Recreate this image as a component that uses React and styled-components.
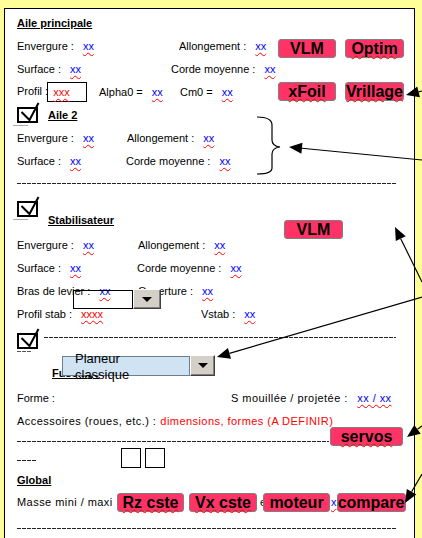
import React from "react"
import styled, { createGlobalStyle, css } from "styled-components"

const GlobalStyle = createGlobalStyle`
  html, body {
    margin: 0;
    padding: 0;
    overflow: hidden;
    background: #ffff99;
  }
  body {
    font-family: "Liberation Sans", Arial, sans-serif;
    font-size: 11px;
    color: #000;
  }
`

const Canvas = styled.div`
  position: relative;
  box-sizing: border-box;
  width: 422px;
  height: 538px;
  padding: 8px 0 0 4px;
  overflow: hidden;
`

const Page = styled.div`
  position: relative;
  box-sizing: border-box;
  width: 411px;
  min-height: 540px;
  padding: 2px 10px 0 12px;
  background: #fff;
  border: 1px solid #000;
  display: flex;
  flex-direction: column;
`

const Row = styled.div`
  position: relative;
  display: flex;
  align-items: ${p => p.$align || "center"};
  height: ${p => p.$h || 23}px;
  flex-shrink: 0;
  white-space: nowrap;
`

const Cell = styled.span`
  flex-shrink: 0;
  width: ${p => (p.$w ? p.$w + "px" : "auto")};
  letter-spacing: ${p => (p.$loose ? "0.45px" : "normal")};
`

const Heading = styled.span`
  font-weight: bold;
  text-decoration: underline;
  margin-left: ${p => p.$indent || 0}px;
  ${p => p.$end && css`
    align-self: flex-end;
    line-height: ${p.$lh || 23}px;
    margin-bottom: ${p.$mb || 0}px;
  `}
`

const V = styled.span`
  color: ${p => (p.$red ? "#ff0000" : "#0000ff")};
  margin-left: ${p => p.$gap ?? 6}px;
  text-decoration: underline wavy #ff0000;
  text-decoration-thickness: 1px;
  text-underline-offset: 2px;
`

const Red = styled.span`
  color: #ff0000;
  margin-left: 4px;
`

const ProfilBox = styled.span`
  display: inline-block;
  box-sizing: border-box;
  width: 40px;
  height: 20px;
  margin-left: -1px;
  padding-left: 3px;
  border: 1px solid #000;
  line-height: 19px;
  vertical-align: middle;
`

const Btn = styled.span`
  display: inline-block;
  box-sizing: border-box;
  flex-shrink: 0;
  width: ${p => p.$w}px;
  height: 19px;
  margin-left: ${p => p.$ml || 0}px;
  background: #ff3366;
  border: 1px solid #7f7f7f;
  border-radius: 3px;
  font-size: 16px;
  font-weight: bold;
  line-height: 17px;
  text-align: center;
  white-space: nowrap;
  ${p => p.$spell && css`
    text-decoration: underline wavy #ff0000;
    text-decoration-thickness: 1px;
    text-underline-offset: 1px;
  `}
  ${p => p.$float && css`
    position: absolute;
    left: ${p.$x}px;
    top: ${p.$y}px;
  `}
  ${p => p.$lift && css`
    align-self: flex-start;
    margin-top: ${p.$lift}px;
  `}
`

const BtnGroup = styled.div`
  display: flex;
  gap: 9px;
  margin-left: auto;
  align-self: ${p => (p.$low ? "flex-end" : "center")};
  margin-bottom: ${p => (p.$low ? -1 : 0)}px;
`

const Rule = styled.div`
  height: 1px;
  flex: ${p => (p.$w ? `0 0 ${p.$w}px` : "1 1 auto")};
  margin-left: ${p => p.$ml || 0}px;
  margin-right: ${p => p.$mr || 0}px;
  background: repeating-linear-gradient(to right, #222 0 4px, transparent 4px 5px);
  ${p => p.$top && css`
    align-self: flex-start;
    margin-top: ${p.$top}px;
  `}
`

const Square = styled.span`
  box-sizing: border-box;
  width: 20px;
  height: 20px;
  border: 1px solid #000;
  align-self: flex-start;
  margin-top: -2px;
  margin-left: ${p => p.$ml}px;
`

const CheckSvg = styled.svg`
  flex-shrink: 0;
  margin-left: -4px;
  align-self: flex-start;
  margin-top: ${p => p.$top}px;
`

const Check = ({ top = 0, mark = "line" }) => (
  <CheckSvg $top={top} width="28" height="27" viewBox="0 0 28 27">
    <rect x="5" y="6" width="19" height="14" fill="none" stroke="#000" strokeWidth="2" />
    <path d="M8.5 10 L16.5 18 L25.5 1" fill="none" stroke="#000" strokeWidth="2" />
    {mark === "line" ? (
      <line x1="0" y1="23.5" x2="15" y2="23.5" stroke="#aaa" />
    ) : (
      <line x1="4" y1="23.5" x2="19" y2="23.5" stroke="#555" strokeDasharray="4 1" />
    )}
  </CheckSvg>
)

const Drop = styled.div`
  position: absolute;
  left: ${p => p.$x}px;
  top: ${p => p.$y}px;
  display: flex;
  align-items: flex-end;
`

const Field = styled.div`
  box-sizing: border-box;
  width: ${p => p.$w}px;
  height: ${p => p.$h}px;
  background: ${p => p.$bg || "transparent"};
  border: 1px solid ${p => p.$line || "#000"};
  padding-left: 12px;
  font-size: 13px;
  line-height: 16px;
  white-space: nowrap;
`

const FieldText = styled.div`
  margin-top: -6px;
`

const DropBtn = styled.div`
  box-sizing: border-box;
  width: ${p => p.$w}px;
  height: ${p => p.$h}px;
  background: #d4d0c8;
  border-top: 1px solid #fff;
  border-left: 1px solid #fff;
  border-right: 1px solid #404040;
  border-bottom: 1px solid #404040;
  box-shadow: inset -1px -1px 0 #808080;
  display: flex;
  align-items: center;
  justify-content: center;
`

const DropArrow = () => (
  <svg width="10" height="5" viewBox="0 0 10 5">
    <polygon points="0,0 10,0 5,5" fill="#000" />
  </svg>
)

const Overlay = styled.svg`
  position: absolute;
  left: 0;
  top: 0;
  pointer-events: none;
`

const Arrow = ({ from, to }) => {
  const [sx, sy] = from
  const [tx, ty] = to
  const len = Math.hypot(sx - tx, sy - ty)
  const ux = (sx - tx) / len
  const uy = (sy - ty) / len
  const bx = tx + ux * 13
  const by = ty + uy * 13
  const pts = [
    [tx, ty],
    [bx - uy * 5.5, by + ux * 5.5],
    [bx + uy * 5.5, by - ux * 5.5],
  ]
  return (
    <g>
      <line x1={sx} y1={sy} x2={bx} y2={by} stroke="#000" strokeWidth="1.2" />
      <polygon points={pts.map(p => p.join(",")).join(" ")} fill="#000" />
    </g>
  )
}

const arrows = [
  { from: [422, 91], to: [406, 95] },
  { from: [422, 160], to: [289, 147] },
  { from: [422, 282], to: [395, 227] },
  { from: [422, 297], to: [217, 357] },
  { from: [422, 426], to: [407, 437] },
  { from: [422, 474], to: [405, 503] },
]

export default function App() {
  return (
    <Canvas>
      <GlobalStyle />
      <Page>
        <Row>
          <Heading>Aile principale</Heading>
        </Row>
        <Row>
          <Cell $w={162}>Envergure : <V>xx</V></Cell>
          <Cell>Allongement : <V>xx</V></Cell>
          <BtnGroup $low>
            <Btn $w={58}>VLM</Btn>
            <Btn $w={59} $spell>Optim</Btn>
          </BtnGroup>
        </Row>
        <Row>
          <Cell $w={154}>Surface : <V>xx</V></Cell>
          <Cell>Corde moyenne : <V>xx</V></Cell>
        </Row>
        <Row>
          <Cell $w={82}>
            Profil :<ProfilBox><V $red $gap={2}>xxx</V></ProfilBox>
          </Cell>
          <Cell $w={81}>Alpha0 = <V>xx</V></Cell>
          <Cell>Cm0 = <V>xx</V></Cell>
          <BtnGroup>
            <Btn $w={58} $spell>xFoil</Btn>
            <Btn $w={59} $spell>Vrillage</Btn>
          </BtnGroup>
        </Row>
        <Row>
          <Check top={-1} />
          <Heading $indent={7}>Aile 2</Heading>
        </Row>
        <Row>
          <Cell $w={110}>Envergure : <V>xx</V></Cell>
          <Cell>Allongement : <V>xx</V></Cell>
        </Row>
        <Row>
          <Cell $w={109}>Surface : <V>xx</V></Cell>
          <Cell>Corde moyenne : <V>xx</V></Cell>
        </Row>
        <Row>
          <Rule $mr={8} />
        </Row>
        <Row $h={38} $align="flex-start">
          <Check top={1} />
          <Heading $indent={7} $end $mb={1}>Stabilisateur</Heading>
          <Btn $w={59} $float $x={267} $y={25}>VLM</Btn>
        </Row>
        <Row>
          <Cell $w={121}>Envergure : <V>xx</V></Cell>
          <Cell>Allongement : <V>xx</V></Cell>
        </Row>
        <Row>
          <Cell $w={120}>Surface : <V>xx</V></Cell>
          <Cell>Corde moyenne : <V>xx</V></Cell>
        </Row>
        <Row>
          <Cell $w={121}>Bras de levier : <V>xx</V></Cell>
          <Cell>Ouverture : <V>xx</V></Cell>
          <Drop $x={56} $y={10}>
            <Field $w={60} $h={19} />
            <DropBtn $w={28} $h={20}><DropArrow /></DropBtn>
          </Drop>
        </Row>
        <Row>
          <Cell $w={184}>Profil stab : <V $red>xxxx</V></Cell>
          <Cell>Vstab : <V>xx</V></Cell>
        </Row>
        <Row $h={27} $align="flex-start">
          <Check top={3} mark="dash" />
          <Rule $ml={3} $mr={8} $top={12} />
        </Row>
        <Row $h={34} $align="flex-start">
          <Heading $indent={35} $end $lh={16} $mb={5}>Fuselage</Heading>
          <Drop $x={45} $y={3}>
            <Field $w={128} $h={20} $bg="#cfe3f3" $line="#6d7f8f">
              <FieldText>Planeur<br />classique</FieldText>
            </Field>
            <DropBtn $w={25} $h={21}><DropArrow /></DropBtn>
          </Drop>
        </Row>
        <Row>
          <Cell $w={214}>Forme :</Cell>
          <Cell $loose>S mouillée / projetée : <V>xx / xx</V></Cell>
        </Row>
        <Row>
          <Cell $loose>Accessoires (roues, etc.) :<Red>dimensions, formes (A DEFINIR)</Red></Cell>
        </Row>
        <Row $h={18}>
          <Rule $w={312} />
          <Btn $w={73} $ml={1} $lift={-5} $spell>servos</Btn>
        </Row>
        <Row $h={20}>
          <Rule $w={20} />
          <Square $ml={84} />
          <Square $ml={4} />
        </Row>
        <Row $h={20}>
          <Heading>Global</Heading>
        </Row>
        <Row $h={24}>
          <Cell $w={100} $loose>Masse mini / maxi</Cell>
          <Btn $w={67} $spell>Rz cste</Btn>
          <Btn $w={68} $ml={5} $spell>Vx cste</Btn>
          <Cell $w={6}>&nbsp;e</Cell>
          <Btn $w={67}>moteur</Btn>
          <V $gap={1}>x</V>
          <Btn $w={69}>compare</Btn>
        </Row>
        <Row $h={28}>
          <Rule $mr={8} />
        </Row>
      </Page>
      <Overlay width="422" height="538" viewBox="0 0 422 538">
        <path
          d="M257 117 Q272 117 272 125 L272 140 Q272 146 280 147 Q272 148 272 154 L272 168 Q272 174 257 174"
          fill="none"
          stroke="#000"
          strokeWidth="1.2"
        />
        {arrows.map((a, i) => (
          <Arrow key={i} from={a.from} to={a.to} />
        ))}
      </Overlay>
    </Canvas>
  )
}
